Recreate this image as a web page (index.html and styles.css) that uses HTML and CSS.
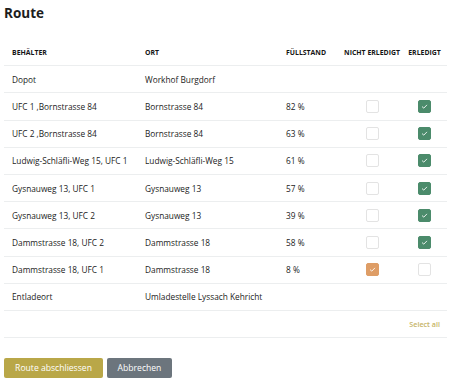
FILE: index.html
```html
<!DOCTYPE html>
<html lang="de">
<head>
<meta charset="utf-8">
<title>Route</title>
<link rel="stylesheet" href="styles.css">
</head>
<body>
<div class="page">
  <h1 class="title">Route</h1>
  <div class="table">
    <div class="row head">
      <div class="cell">BEHÄLTER</div>
      <div class="cell">ORT</div>
      <div class="cell">FÜLLSTAND</div>
      <div class="cell center">NICHT ERLEDIGT</div>
      <div class="cell center">ERLEDIGT</div>
    </div>
    <div class="row">
      <div class="cell">Dopot</div>
      <div class="cell">Workhof Burgdorf</div>
      <div class="cell"></div><div class="cell"></div><div class="cell"></div>
    </div>
    <div class="row">
      <div class="cell">UFC 1 ,Bornstrasse 84</div>
      <div class="cell">Bornstrasse 84</div>
      <div class="cell">82 %</div>
      <div class="cell center"><span class="cb"></span></div>
      <div class="cell center"><span class="cb green"><svg viewBox="0 0 14 14"><path d="M4.2 7.4 L6.1 9.1 L9.8 5.3"/></svg></span></div>
    </div>
    <div class="row">
      <div class="cell">UFC 2 ,Bornstrasse 84</div>
      <div class="cell">Bornstrasse 84</div>
      <div class="cell">63 %</div>
      <div class="cell center"><span class="cb"></span></div>
      <div class="cell center"><span class="cb green"><svg viewBox="0 0 14 14"><path d="M4.2 7.4 L6.1 9.1 L9.8 5.3"/></svg></span></div>
    </div>
    <div class="row">
      <div class="cell">Ludwig-Schläfli-Weg 15, UFC 1</div>
      <div class="cell">Ludwig-Schläfli-Weg 15</div>
      <div class="cell">61 %</div>
      <div class="cell center"><span class="cb"></span></div>
      <div class="cell center"><span class="cb green"><svg viewBox="0 0 14 14"><path d="M4.2 7.4 L6.1 9.1 L9.8 5.3"/></svg></span></div>
    </div>
    <div class="row">
      <div class="cell">Gysnauweg 13, UFC 1</div>
      <div class="cell">Gysnauweg 13</div>
      <div class="cell">57 %</div>
      <div class="cell center"><span class="cb"></span></div>
      <div class="cell center"><span class="cb green"><svg viewBox="0 0 14 14"><path d="M4.2 7.4 L6.1 9.1 L9.8 5.3"/></svg></span></div>
    </div>
    <div class="row">
      <div class="cell">Gysnauweg 13, UFC 2</div>
      <div class="cell">Gysnauweg 13</div>
      <div class="cell">39 %</div>
      <div class="cell center"><span class="cb"></span></div>
      <div class="cell center"><span class="cb green"><svg viewBox="0 0 14 14"><path d="M4.2 7.4 L6.1 9.1 L9.8 5.3"/></svg></span></div>
    </div>
    <div class="row">
      <div class="cell">Dammstrasse 18, UFC 2</div>
      <div class="cell">Dammstrasse 18</div>
      <div class="cell">58 %</div>
      <div class="cell center"><span class="cb"></span></div>
      <div class="cell center"><span class="cb green"><svg viewBox="0 0 14 14"><path d="M4.2 7.4 L6.1 9.1 L9.8 5.3"/></svg></span></div>
    </div>
    <div class="row">
      <div class="cell">Dammstrasse 18, UFC 1</div>
      <div class="cell">Dammstrasse 18</div>
      <div class="cell">8 %</div>
      <div class="cell center"><span class="cb orange"><svg viewBox="0 0 14 14"><path d="M4.2 7.4 L6.1 9.1 L9.8 5.3"/></svg></span></div>
      <div class="cell center"><span class="cb"></span></div>
    </div>
    <div class="row">
      <div class="cell">Entladeort</div>
      <div class="cell span4">Umladestelle Lyssach Kehricht</div>
    </div>
    <div class="row foot">
      <div class="cell full"><a class="select-all">Select all</a></div>
    </div>
  </div>
  <div class="actions">
    <button class="btn gold">Route abschliessen</button>
    <button class="btn gray">Abbrechen</button>
  </div>
</div>
</body>
</html>
```
FILE: styles.css
```css
* { box-sizing: border-box; }
html, body { margin: 0; padding: 0; background: #fff; }
body {
  font-family: "Open Sans", "Noto Sans", sans-serif;
  color: #222;
}
.page { padding: 3px 4px 0 4px; width: 451px; }
.title {
  margin: 0;
  font-size: 13.5px;
  line-height: 20px;
  font-weight: 700;
  color: #1d1d1d;
}
.table { margin-top: 16px; }
.row {
  display: grid;
  grid-template-columns: 133px 141px 64px 60px 45px;
  height: 27.2px;
  border-bottom: 1px solid #eceeef;
  align-items: center;
  font-size: 8.3px;
}
.row.head { font-weight: 700; font-size: 6.9px; color: #151515; }
.cell { padding-left: 8px; white-space: nowrap; }
.cell.center { padding-left: 0; display: flex; justify-content: center; }
.span4 { grid-column: 2 / 6; }
.full { grid-column: 1 / 6; text-align: right; padding-right: 7px; }
.select-all { color: #c6b466; font-size: 7.2px; font-weight: 600; }
.cb {
  width: 13px; height: 13px;
  border: 1px solid #e3e3e3;
  border-radius: 2px;
  display: inline-block;
  background: #fff;
}
.cb svg { width: 100%; height: 100%; display: block; }
.cb svg path { fill: none; stroke: #fff; stroke-width: 1.1; stroke-linecap: round; stroke-linejoin: round; }
.cb.green { background: #4b8b6b; border-color: #4b8b6b; }
.cb.orange { background: #de9d66; border-color: #de9d66; }
.actions { display: flex; gap: 4px; margin-top: 20px; }
.btn {
  font-family: inherit;
  font-size: 8.6px;
  height: 20px;
  border: 0;
  border-radius: 2px;
  color: #fff;
  padding: 0;
}
.btn.gold { background: #b9a748; width: 99px; }
.btn.gray { background: #6c757d; width: 65px; }
```
